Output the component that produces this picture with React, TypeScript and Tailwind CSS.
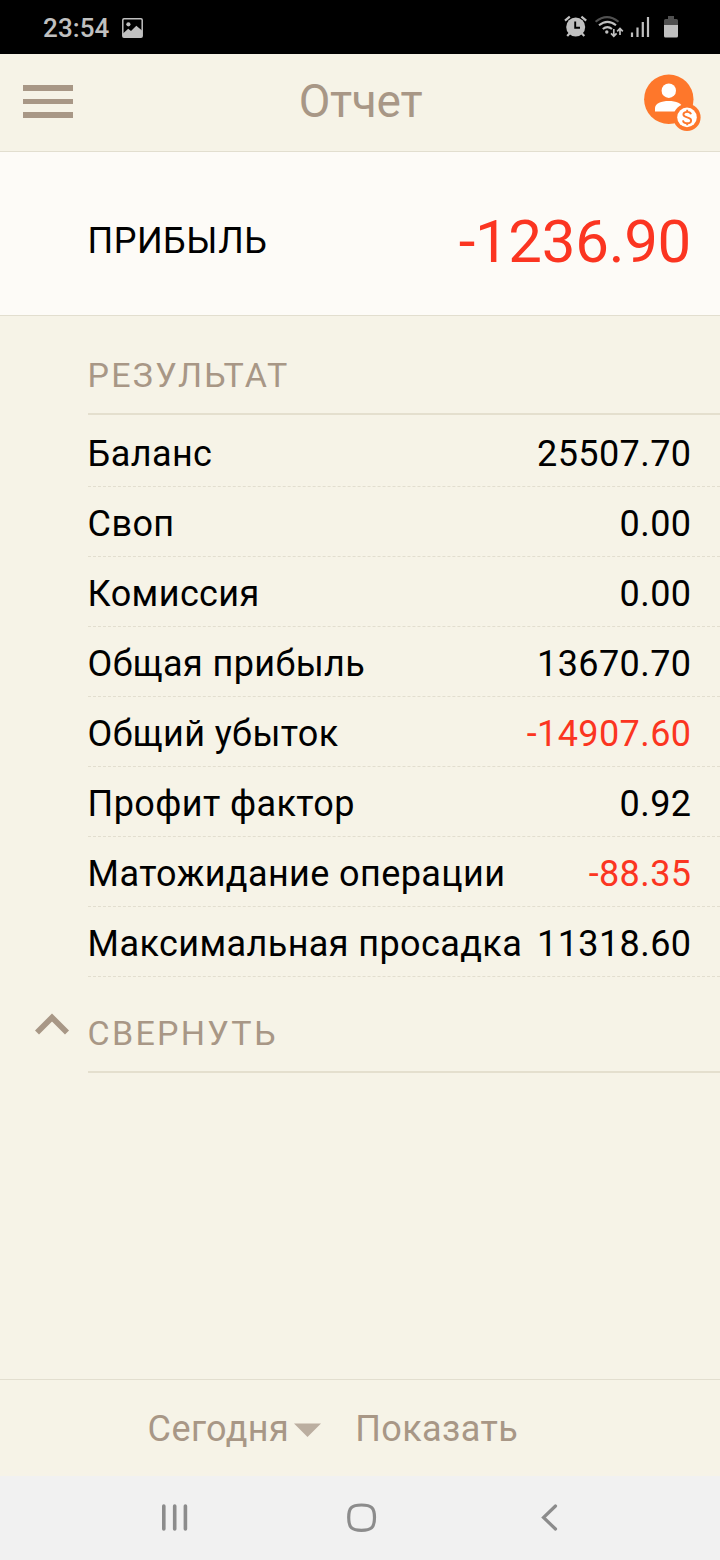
import React from "react";

type Row = { label: string; value: string; negative?: boolean };

const rows: Row[] = [
  { label: "Баланс", value: "25507.70" },
  { label: "Своп", value: "0.00" },
  { label: "Комиссия", value: "0.00" },
  { label: "Общая прибыль", value: "13670.70" },
  { label: "Общий убыток", value: "-14907.60", negative: true },
  { label: "Профит фактор", value: "0.92" },
  { label: "Матожидание операции", value: "-88.35", negative: true },
  { label: "Максимальная просадка", value: "11318.60" },
];

function StatusBar() {
  return (
    <div className="flex h-[54px] shrink-0 items-center bg-black pl-[43px] pr-[41px] text-[#c0c0c0]">
      <span className="pt-[2px] text-[26px] leading-[30px] font-medium tracking-[0.1px]">23:54</span>
      <svg className="ml-[12.5px] mt-[2px]" width="21" height="20" viewBox="0 0 21 20">
        <rect x="0.8" y="0.8" width="19.4" height="18.4" rx="1.2" fill="none" stroke="currentColor" strokeWidth="1.5" />
        <circle cx="6.4" cy="6.3" r="2.1" fill="currentColor" />
        <path d="M1 15.5L6.2 10.8L9 13L14.3 7.8L20 12.5V19H1Z" fill="currentColor" />
      </svg>
      <svg className="ml-auto" width="115" height="24" viewBox="564 15 115 24">
        <g fill="none" stroke="currentColor" strokeWidth="2.2">
          <path d="M565 20.7L569.8 16.6M586.2 20.7L581.4 16.6M570 33L567.2 36M581.5 33L584.3 36" />
        </g>
        <circle cx="575.7" cy="27" r="9.5" fill="currentColor" />
        <path d="M575.2 21.5V27.8H580" fill="none" stroke="#000" strokeWidth="1.9" />
        <g fill="none" strokeWidth="2.1">
          <path d="M595.6 21.8Q607 12.3 618.5 21.8" stroke="#505050" />
          <path d="M599 25.3Q607.4 18.3 616 25.3" stroke="currentColor" />
          <path d="M602.8 29Q607.4 25.2 612 29" stroke="currentColor" />
        </g>
        <circle cx="606.8" cy="32" r="1.7" fill="currentColor" />
        <path d="M613.8 29V36M611 33.3L613.8 36.2L616.6 33.3M620 35V28.5M617.2 31.3L620 28.4L622.8 31.3" fill="none" stroke="currentColor" strokeWidth="1.7" />
        <path d="M632 32.5V37M637.5 27.5V37M642.8 22V37M648 17V37" stroke="currentColor" strokeWidth="2.2" />
        <path d="M664 25V20.5Q664 19 665.5 19H668V16H674V19H676.5Q678 19 678 20.5V25Z" fill="#505050" />
        <path d="M664 25H678V36Q678 37.5 676.5 37.5H665.5Q664 37.5 664 36Z" fill="currentColor" />
      </svg>
    </div>
  );
}

function Header() {
  return (
    <header className="flex h-[98px] shrink-0 items-start justify-between border-b border-[#e2decf] pl-[23px] pr-[19px]">
      <div className="mt-[31px] flex w-[50px] flex-col gap-[8px]">
        <div className="h-[5.5px] bg-[#a89786]" />
        <div className="h-[5.5px] bg-[#a89786]" />
        <div className="h-[5.5px] bg-[#a89786]" />
      </div>
      <h1 className="mt-[20px] ml-[5px] text-[46px] leading-[54px] tracking-[-0.3px] text-[#a89786]">Отчет</h1>
      <svg className="mt-[20px]" width="58" height="58" viewBox="643 74 58 58">
        <circle cx="668.8" cy="99.3" r="24.7" fill="#fe772b" />
        <circle cx="668.8" cy="90.7" r="7.2" fill="#fff" />
        <path d="M655 111.6V108C655 103.5 661.5 101 668.7 101C676 101 682.5 103.5 682.5 108V111.6Z" fill="#fff" />
        <circle cx="687" cy="117.4" r="13.6" fill="#fe772b" />
        <circle cx="687" cy="117.4" r="9.8" fill="#fff" />
        <path d="M691 114.2C690.6 112.6 689.2 111.9 687.2 111.9C684.8 111.9 683.4 113 683.4 114.6C683.4 118.5 691.1 116.3 691.1 120.4C691.1 122.2 689.6 123.2 687.2 123.2C684.8 123.2 683.2 122.3 683 120.3M687.2 109.8V112M687.2 123.2V125.3" fill="none" stroke="#fe772b" strokeWidth="1.9" />
      </svg>
    </header>
  );
}

export default function App() {
  return (
    <div className="flex h-[1560px] w-[720px] flex-col bg-[#f6f3e7] text-black [font-family:Roboto,sans-serif]">
      <StatusBar />
      <Header />
      <section className="flex h-[164px] shrink-0 items-start justify-between border-b border-[#e2decf] bg-[#fdfbf7] pl-[87.5px] pr-[29px]">
        <span className="mt-[68px] text-[36px] leading-[42px] tracking-[0.5px]">ПРИБЫЛЬ</span>
        <span className="mt-[55px] text-[60px] leading-[70px] tracking-[-0.3px] text-[#fb3521]">-1236.90</span>
      </section>
      <main className="grow pl-[88px]">
        <h2 className="h-[99px] border-b-2 border-[#e4dfce] pt-[39px] text-[34px] leading-[40px] tracking-[2.3px] text-[#a89786]">
          <span className="-ml-[0.5px]">РЕЗУЛЬТАТ</span>
        </h2>
        <div className="pt-[2px]">
          {rows.map((r) => (
            <div key={r.label} className="flex h-[70px] justify-between border-b border-dashed border-[#e2decf] pt-[16px] pr-[28.6px] text-[36px] leading-[42px] tracking-[0.4px] whitespace-nowrap">
              <span className="-ml-[0.4px]">{r.label}</span>
              <span className={r.negative ? "text-[#fb3521]" : ""}>{r.value}</span>
            </div>
          ))}
        </div>
        <div className="-ml-[53px] flex">
          <svg className="mt-[36px] mr-[18px] shrink-0" width="35" height="22" viewBox="35 1013 35 22">
            <path d="M37 1032.5L52 1017.5L67 1032.5" fill="none" stroke="#a89786" strokeWidth="5.7" />
          </svg>
          <h2 className="h-[96px] grow border-b-2 border-[#e4dfce] pt-[36px] text-[34px] leading-[40px] tracking-[2.3px] text-[#a89786]">
            <span className="-ml-[0.5px]">СВЕРНУТЬ</span>
          </h2>
        </div>
      </main>
      <footer className="flex h-[97px] shrink-0 border-t border-[#e2decf] pt-[28px] pl-[147.6px] text-[36px] leading-[42px] tracking-[0.4px] text-[#a89786]">
        <span>Сегодня</span>
        <svg className="mt-[15px] ml-[4.4px]" width="27" height="14" viewBox="0 0 27 14">
          <path d="M0 0.5H27L13.5 14Z" fill="#bbaea0" />
        </svg>
        <span className="ml-[34.6px]">Показать</span>
      </footer>
      <nav className="flex h-[84px] shrink-0 items-center bg-[#f1f1f1] pl-[161px]">
        <svg width="398" height="32" viewBox="161 1502 398 32" fill="none" stroke="#8c8c8c" strokeLinecap="round">
          <path d="M163.8 1506V1529M174.7 1506V1529M185.4 1506V1529" strokeWidth="3.6" />
          <path d="M361.5 1505C371.5 1505 374.5 1508 374.5 1517.5C374.5 1527.5 371.5 1530.3 361.5 1530.3C351.5 1530.3 348.7 1527.5 348.7 1517.5C348.7 1508 351.5 1505 361.5 1505Z" strokeWidth="3.2" />
          <path d="M555.5 1506L543.5 1517.5L555.5 1529" strokeWidth="3.2" />
        </svg>
      </nav>
    </div>
  );
}
